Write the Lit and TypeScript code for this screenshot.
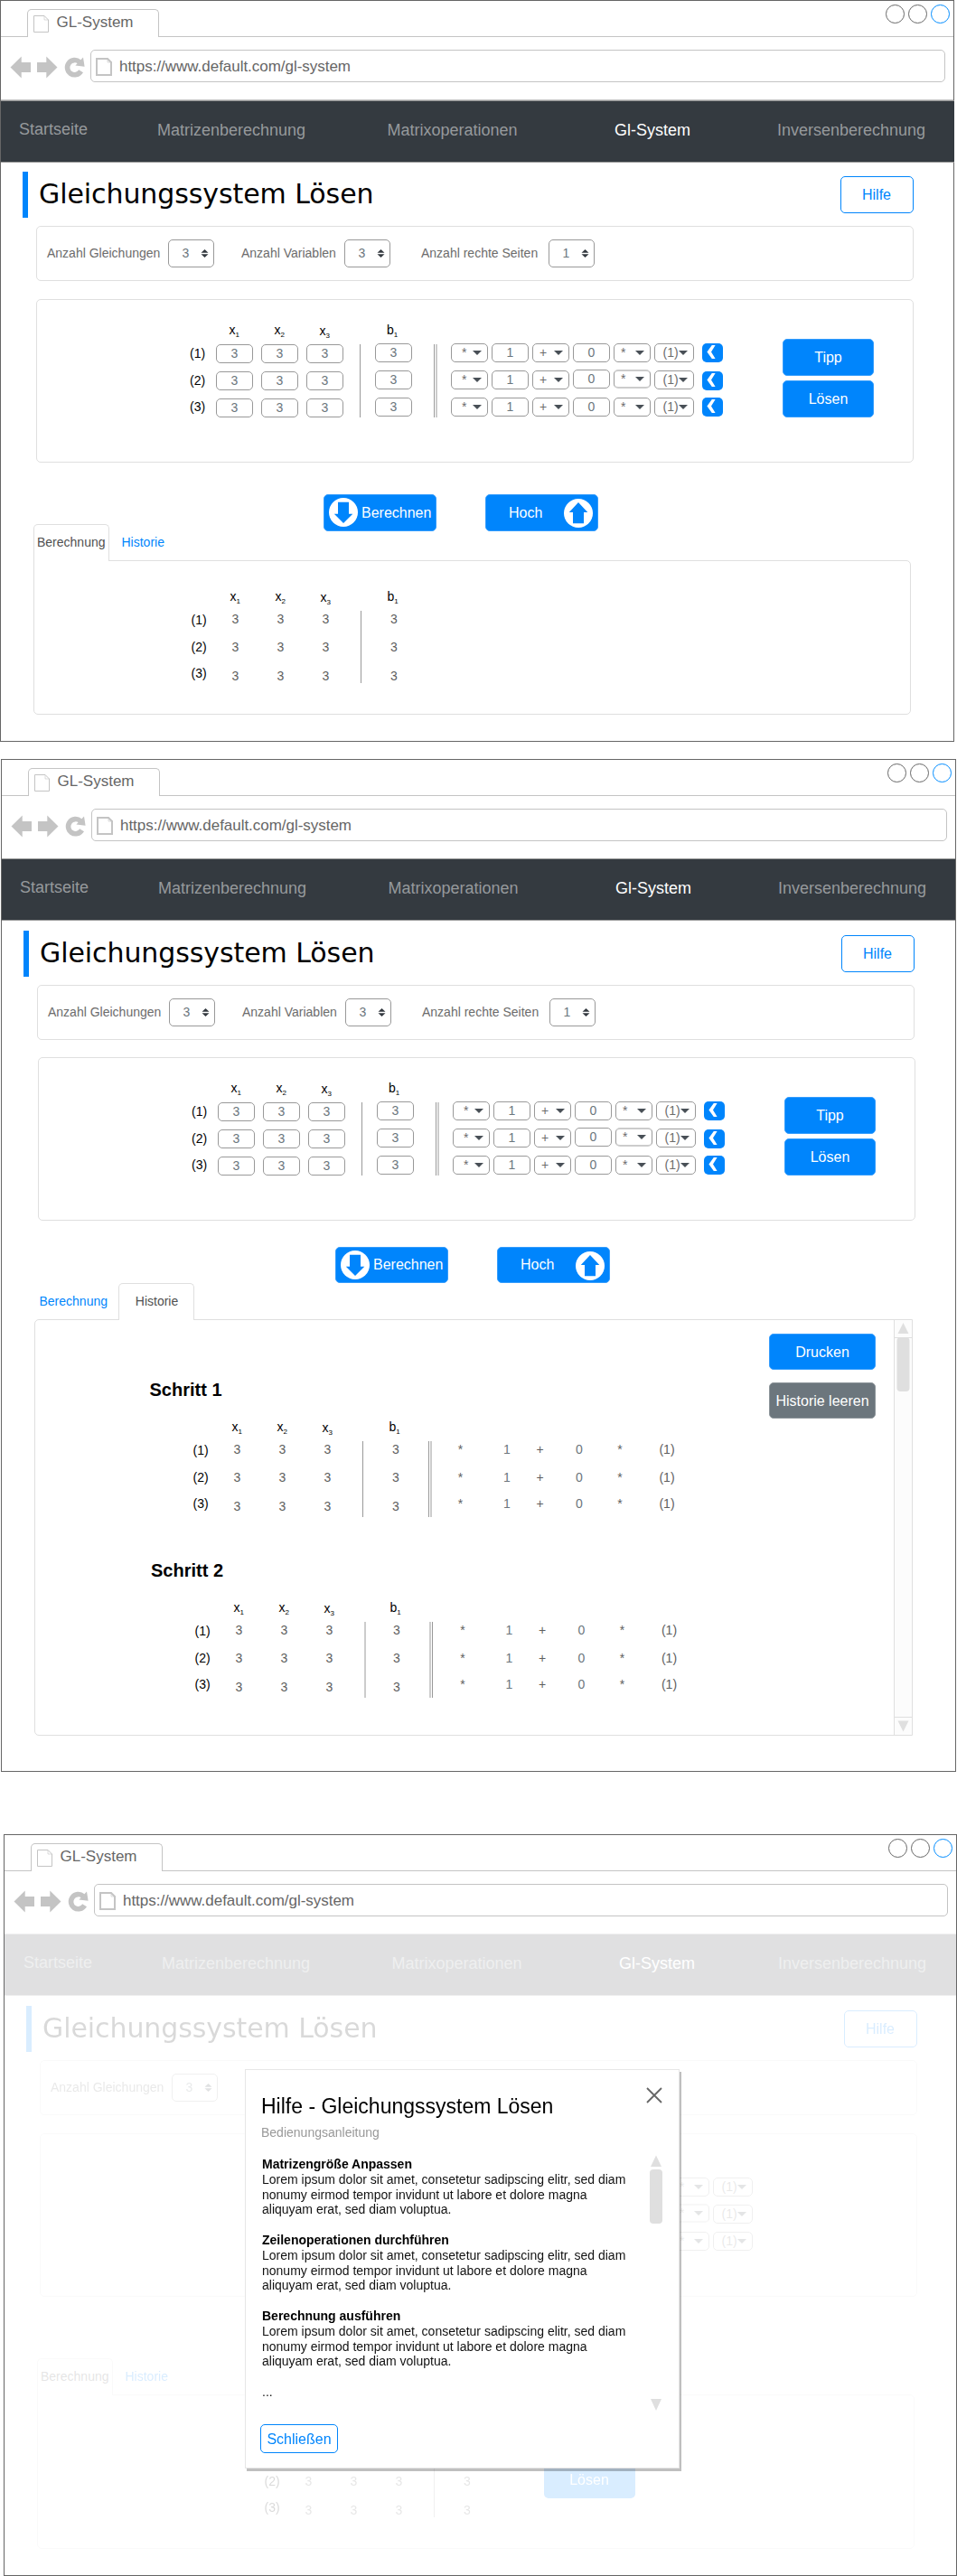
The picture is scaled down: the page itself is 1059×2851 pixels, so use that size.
import { LitElement, html, svg, css, nothing, TemplateResult } from "lit";
import { customElement, property } from "lit/decorators.js";
import { classMap } from "lit/directives/class-map.js";
import { styleMap } from "lit/directives/style-map.js";

type Part = TemplateResult | string | typeof nothing;

/** One vertical strip of a matrix: distance to the previous strip, width and stacked items. */
interface Strip {
  gap: number;
  width: number;
  items: Array<[number, Part]>;
}

const strip = (gap: number, width: number, items: Array<[number, Part]>): Strip => ({ gap, width, items });

const px = (n: number) => `${n}px`;

const renderStrips = (strips: Strip[]) =>
  strips.map(
    (s) => html`<div class="strip" style=${styleMap({ marginLeft: px(s.gap), width: px(s.width) })}>
      ${s.items.map(([top, part]) => html`<div class="item" style=${styleMap({ marginTop: px(top) })}>${part}</div>`)}
    </div>`
  );

const head = (name: string, index: string) => html`<span class="head ${name}">${name}<span class="idx">${index}</span></span>`;
const label = (n: number) => html`<span class="label">(${n})</span>`;
const field = (v: string) => html`<span class="field">${v}</span>`;
const value = (v: string) => html`<span class="value">${v}</span>`;
const soft = (v: string) => html`<span class="value soft">${v}</span>`;
const rule = (kind: string, height: number) => html`<span class="rule ${kind}" style=${styleMap({ height: px(height) })}></span>`;
const caret = html`<svg class="caret" width="10" height="5" viewBox="0 0 10 5"><path d="M0 0H10L5 5Z" fill="#495057" /></svg>`;
const pick = (v: string, kind: string) => html`<span class="field pick ${kind}"><span class="pickText">${v}</span>${caret}</span>`;
const apply = html`<span class="apply"
  ><svg width="10" height="15" viewBox="0 0 10 15"><path d="M5.8 0H9.6L5 7.5L9.6 15H5.8L.4 7.5Z" fill="#fff" /></svg
></span>`;

const arrowIcon = (up: boolean) => html`<svg class="round" width="32" height="32" viewBox="0 0 32 32">
  <circle cx="16" cy="16" r="16" fill="#fff" />
  ${up
    ? svg`<path d="M16 4L26.3 15H22V27.2H10V15H5.8Z" fill="#0085fc" />`
    : svg`<path d="M10 4.8H22V17.8H26.3L16 28L5.8 17.8H10Z" fill="#0085fc" />`}
</svg>`;

const pageIcon = (w: number, h: number, stroke: number) => html`<svg class="page" width=${w} height=${h} viewBox="0 0 ${w} ${h}" fill="none" stroke="#c4c4c4">
  <path d="M${stroke / 2} ${stroke / 2}H${w - 5}L${w - stroke / 2} 5V${h - stroke / 2}H${stroke / 2}Z" stroke-width=${stroke} />
  <path d="M${w - 5} .5V5H${w - 0.5}" stroke-width="1" opacity=".6" />
</svg>`;

const matrixStyles = css`
  .strip { flex: none; }
  .item { display: flex; }
  .head { color: #000; font-size: 14px; line-height: 16px; height: 16px; padding-left: 14.5px; white-space: nowrap; }
  .head.b { padding-left: 13px; }
  .idx { font-size: 8px; line-height: 0; position: relative; top: 3px; }
  .label { color: #000; font-size: 14px; line-height: 16px; }
  .field {
    width: 100%; height: 21px; border: 1px solid #999; border-radius: 5px; background: #fff;
    color: #6c767d; font-size: 14px; line-height: 18px; text-align: center;
  }
  .value { width: 100%; text-align: center; color: #5e5e5e; font-size: 14px; line-height: 16px; }
  .value.soft { color: #6c767d; }
  .rule { width: 100%; }
  .rule.thin { background: #999; }
  .rule.wide { background: #ccc; }
  .rule.thinWide { border-left: 1px solid #999; border-right: 2px solid #ccc; }
  .rule.wideThin { border-left: 2px solid #ccc; border-right: 1px solid #999; }
  .pick { display: flex; color: #6c6c6c; text-align: left; }
  .pickText { width: 23px; padding-left: 7px; flex: none; }
  .pick.first .pickText { padding-left: 11px; }
  .pick.row .pickText { width: 26px; padding-left: 8.5px; }
  .pick.double { border-top: 2px solid #ccc; border-bottom: 2px solid #ccc; line-height: 17px; }
  .pick.double .caret { margin-top: 6px; }
  .caret { margin-top: 7px; flex: none; display: block; }
  .apply { width: 23px; height: 21px; background: #0085fc; border-radius: 5px; padding: 2px 0 0 5.5px; }
  .apply svg { display: block; }
`;

const shared = css`
  * { box-sizing: border-box; }
  :host { display: block; font-family: "Liberation Sans", Arial, Helvetica, sans-serif; }
`;

/** Entry matrix with the row operations beside it. */
@customElement("matrix-editor")
class MatrixEditor extends LitElement {
  @property({ type: Boolean }) tail = false;

  static styles = [
    shared,
    matrixStyles,
    css`
      .editor { display: flex; width: 971px; height: 181px; border: 1px solid #dfdfdf; border-radius: 5px; }
      .editor { padding-left: 169px; }
      .editor.tail { padding-left: 699px; }
      .btns { margin: 43px 0 0 66px; display: flex; flex-direction: column; gap: 5px; }
      .btn {
        width: 101px; height: 41px; border-radius: 5px; border: 1px solid #369dfc; background: #0085fc; color: #fff;
        font-size: 16px; line-height: 40px; text-align: center;
      }
    `,
  ];

  private ops(): Strip[] {
    return [
      strip(4, 41, [[48, pick("*", "mid")], [8, pick("*", "double")], [10, pick("*", "mid")]]),
      strip(4, 44, [[48, pick("(1)", "row")], [9, pick("(1)", "row")], [9, pick("(1)", "row")]]),
    ];
  }

  render() {
    if (this.tail) {
      const [star, row] = this.ops();
      return html`<div class="editor tail">${renderStrips([{ ...star, gap: 0 }, row])}</div>`;
    }
    const x = (i: string, gap: number, extra = 0) =>
      strip(gap, 41, [[25 + extra, head("x", i)], [8 - extra, field("3")], [9, field("3")], [9, field("3")]]);
    const strips: Strip[] = [
      strip(0, 18, [[51, label(1)], [14, label(2)], [13, label(3)]]),
      x("1", 11),
      x("2", 9),
      x("3", 9, 1),
      strip(18, 1, [[49, rule("thin", 81)]]),
      strip(16, 41, [[25, head("b", "1")], [7, field("3")], [9, field("3")], [9, field("3")]]),
      strip(24, 4, [[49, rule("thinWide", 81)]]),
      strip(15, 41, [[48, pick("*", "first")], [9, pick("*", "first")], [9, pick("*", "first")]]),
      strip(4, 41, [[48, field("1")], [9, field("1")], [9, field("1")]]),
      strip(4, 41, [[48, pick("+", "mid")], [9, pick("+", "mid")], [9, pick("+", "mid")]]),
      strip(4, 41, [[48, field("0")], [8, field("0")], [10, field("0")]]),
      ...this.ops(),
      strip(8.5, 23.5, [[48, apply], [10, apply], [8, apply]]),
    ];
    return html`<div class="editor">
      ${renderStrips(strips)}
      <div class="btns"><div class="btn">Tipp</div><div class="btn">Lösen</div></div>
    </div>`;
  }
}

/** Read-only matrix; the history adds the operations, the dimmed page shows only the last rows. */
@customElement("matrix-result")
class MatrixResult extends LitElement {
  @property() mode: "plain" | "step1" | "step2" | "tail" = "plain";

  static styles = [shared, matrixStyles, css`.result { display: flex; }`];

  private strips(): Strip[] {
    if (this.mode === "tail") {
      const col = (gap: number) => strip(gap, 41, [[87, value("3")], [16, value("3")]]);
      return [
        strip(0, 18, [[87, label(2)], [13, label(3)]]),
        col(10.5),
        col(9),
        col(9),
        strip(17.5, 1, [[80, rule("thin", 55)]]),
        col(16),
      ];
    }
    const step = this.mode !== "plain";
    const second = this.mode === "step2";
    const col = (name: string, i: string, gap: number, extra = 0) =>
      strip(gap, 41, [
        [31 + extra, head(name, i)],
        [9 - extra, value("3")],
        [15, value("3")],
        [16, value("3")],
      ]);
    const list: Strip[] = [
      strip(0, 18, [[57, label(1)], [14, label(2)], [13, label(3)]]),
      col("x", "1", 10.5),
      col("x", "2", 9),
      col("x", "3", 9, 1),
      second ? strip(17.5, 2, [[55, rule("wide", 84)]]) : strip(17.5, 1, [[55, rule("thin", step ? 84 : 80)]]),
      col("b", "1", second ? 14 : 16),
    ];
    if (step) {
      const op = (v: string, gap: number, tint = false) => {
        const cell = tint ? soft : value;
        return strip(gap, 30, [[56, cell(v)], [15, cell(v)], [13, cell(v)]]);
      };
      list.push(
        strip(second ? 15.5 : 15, 4, [[55, rule(second ? "wideThin" : "thinWide", 84)]]),
        op("*", second ? 18 : 17),
        op("1", 21.5, true),
        op("+", 6.5),
        op("0", 13.5, true),
        op("*", 15),
        op("(1)", 22)
      );
    }
    return list;
  }

  render() {
    return html`<div class="result">${renderStrips(this.strips())}</div>`;
  }
}

/** Help dialog over the dimmed page. */
@customElement("help-dialog")
class HelpDialog extends LitElement {
  static styles = [
    shared,
    css`
      .dialog {
        width: 481px; height: 442px; background: #fff; border: 1px solid #e6e6e6; box-shadow: 2px 3px 0 rgba(0, 0, 0, 0.25);
        display: flex; padding: 0 17px 0 17px; justify-content: space-between;
      }
      .title { font-size: 23px; line-height: 26px; margin-top: 27px; white-space: nowrap; color: #000; }
      .sub { font-size: 14px; line-height: 16px; color: #999; margin-top: 8px; }
      .text { font-size: 14px; line-height: 16.8px; color: #111; margin: 19px 0 0 1px; white-space: pre; }
      .text b { color: #000; }
      .close {
        margin: 27px 0 0 -1px; width: 86px; height: 32px; border: 1px solid #0085fc; border-radius: 5px; color: #0085fc;
        font-size: 16px; line-height: 31px; text-align: center;
      }
      .side { display: flex; flex-direction: column; align-items: flex-end; margin-top: 19px; }
      .side svg { display: block; }
      .bar { margin-top: 57px; }
    `,
  ];

  render() {
    const lorem =
      "Lorem ipsum dolor sit amet, consetetur sadipscing elitr, sed diam\nnonumy eirmod tempor invidunt ut labore et dolore magna\naliquyam erat, sed diam voluptua.\n\n";
    const heads = ["Matrizengröße Anpassen", "Zeilenoperationen durchführen", "Berechnung ausführen"];
    return html`<div class="dialog">
      <div>
        <div class="title">Hilfe - Gleichungssystem Lösen</div>
        <div class="sub">Bedienungsanleitung</div>
        <div class="text">${heads.map((h) => html`<b>${h}</b>${"\n" + lorem}`)}...</div>
        <div class="close">Schließen</div>
      </div>
      <div class="side">
        <svg width="19" height="18" viewBox="0 0 19 18"><path d="M1 1L17 17M17 1L1 17" stroke="#666" stroke-width="1.8" /></svg>
        <svg class="bar" width="16" height="284" viewBox="0 0 16 284" fill="#dfdfdf">
          <path d="M8 .5L14 13H2Z" />
          <rect x="1" y="16" width="14" height="60" rx="4" />
          <path d="M2 270H14L8 283Z" />
        </svg>
      </div>
    </div>`;
  }
}

/** A browser window with the equation system page in it. */
@customElement("gl-window")
class GlWindow extends LitElement {
  @property() view: "calc" | "history" | "help" = "calc";

  static styles = [
    shared,
    css`
      .window { border: 1px solid #666; background: #fff; position: relative; }
      .calc { width: 1056px; height: 821px; }
      .history { width: 1057px; height: 1121px; }
      .help { width: 1055px; height: 821px; }

      .tabs { display: flex; height: 40px; border-bottom: 1px solid #c4c4c4; padding-left: 29px; align-items: flex-end; }
      .tab {
        width: 146px; height: 31px; margin-bottom: -1px; background: #fff; border: 1px solid #c4c4c4; border-bottom: 0;
        border-radius: 5px 5px 0 0; display: flex; padding: 4px 0 0 6px;
      }
      .tabText { font-size: 17px; line-height: 19px; color: #666; margin-left: 8.5px; white-space: nowrap; }
      .page { display: block; flex: none; }
      .tab .page { margin-top: 2px; }
      .dots { margin: 0 4px 14px auto; display: flex; gap: 4px; }
      .dot { width: 21px; height: 21px; border: 1px solid #666; border-radius: 50%; }
      .dot.on { border-color: #008cff; }

      .address { display: flex; height: 69px; padding: 14px 9px 0 0; }
      .calc .address { height: 70px; border-bottom: 1px solid #c4c4c4; }
      .arrows { flex: none; display: block; }
      .url { flex: 1; height: 36px; border: 1px solid #c4c4c4; border-radius: 5px; display: flex; padding: 8px 0 0 5px; }
      .urlText { font-size: 17px; line-height: 19px; color: #666; margin-left: 8px; letter-spacing: -0.03px; }

      .nav {
        display: flex; height: 69px; background: #343a40; border: solid #999; border-width: 1px 0; color: #96999c;
        font-size: 18px; line-height: 20px; padding: 22px 0 0 20px; white-space: nowrap;
      }
      .calc .nav { margin-right: -1px; position: relative; }
      .help .nav { padding-left: 21px; }
      .nav div:nth-child(1) { width: 153px; margin-top: -1px; }
      .nav div:nth-child(2) { width: 254.5px; }
      .nav div:nth-child(3) { width: 251.5px; }
      .nav div:nth-child(4) { width: 180px; color: #fff; }
      .help .nav div:nth-child(4) { width: 176px; }

      .help .dim { opacity: 0.15; }
      .titleRow { display: flex; height: 51px; margin-top: 11px; padding-left: 24px; }
      .calc .titleRow { margin-top: 10px; }
      .mark { width: 6px; background: #0085fc; }
      .title {
        font-family: "DejaVu Sans", sans-serif; font-size: 30px; line-height: 35px; padding: 7px 0 0 12px; width: 899px; color: #000;
        letter-spacing: -0.08px;
      }
      .helpBtn {
        width: 81px; height: 41px; margin-top: 5px; border: 1px solid #0085fc; border-radius: 5px; color: #0085fc;
        font-size: 16px; line-height: 39px; text-align: center; padding-right: 1px;
      }
      .settings { margin: 9px 0 0 39px; width: 971px; height: 61px; border: 1px solid #dfdfdf; border-radius: 5px; display: flex; padding: 14px 0 0 11px; }
      .name { font-size: 14px; line-height: 16px; color: #6c6c6c; padding-top: 7px; white-space: nowrap; }
      .n1 { width: 134px; }
      .n2 { width: 114px; margin-left: 30px; }
      .n3 { width: 141px; margin-left: 34px; }
      .select { width: 51px; height: 31px; border: 1px solid #999; border-radius: 5px; display: flex; padding-left: 14.5px; color: #6c767d; font-size: 14px; line-height: 28px; }
      .select svg { margin: 10px 0 0 12.5px; display: block; }

      .editor { margin: 20px 0 0 39px; }
      .history .editor { margin: 19px 0 0 40px; }

      .actions { display: flex; gap: 54px; height: 33px; margin: 35px 0 0 357px; }
      .history .actions { height: 40px; margin: 29px 0 0 369px; }
      .action {
        width: 125px; height: 41px; flex: none; background: #0085fc; border: 1px solid #369dfc; border-radius: 5px; color: #fff; font-size: 16px;
        line-height: 39px; display: flex; padding-left: 5px;
      }
      .history .action { height: 40px; line-height: 38px; }
      .action .round { margin-top: 3px; flex: none; display: block; }
      .action span { margin-left: 4px; }
      .action.up { padding-left: 25px; }
      .action.up span { margin: 0 24px 0 0; }
      .action.up .round { margin-top: 4px; }
      .help .actions { height: 68px; margin-top: 0; }

      .views { display: flex; height: 40px; padding-left: 36px; font-size: 14px; line-height: 16px; }
      .view { height: 41px; width: 84px; padding-top: 12px; color: #0085fc; flex: none; text-align: center; }
      .view.on { border: 1px solid #dfdfdf; border-bottom: 0; border-radius: 5px 5px 0 0; background: #fff; color: #505050; padding-top: 11px; position: relative; }
      .view.narrow { text-align: left; padding-left: 3px; }
      .view.idle { text-align: left; padding-left: 13.5px; }
      .history .view.idle { width: 93px; padding-left: 5.5px; }
      .history .view.on { padding-left: 1px; }

      .output { width: 971px; height: 171px; margin-left: 36px; border: 1px solid #dfdfdf; border-radius: 0 5px 5px 5px; padding-left: 173.5px; display: flex; }
      .help .output { padding-left: 250.5px; }
      .ghost {
        margin: 73px 0 0 64px; width: 101px; height: 41px; border-radius: 5px; background: #0085fc; color: #fff; font-size: 16px;
        line-height: 41px; text-align: center;
      }

      .history .output { height: 461px; width: 972px; border-radius: 5px 0 0 5px; padding: 0; justify-content: space-between; }
      .steps { padding-left: 126.5px; }
      .step { height: 200px; }
      .stepName { font-size: 20px; line-height: 22px; font-weight: bold; color: #000; padding-top: 66px; height: 79px; white-space: nowrap; }
      .stepBody { padding-left: 48px; }
      .step.second .stepName { padding-left: 1.5px; }
      .step.second .stepBody { padding-left: 50px; }
      .side { display: flex; }
      .tools { display: flex; flex-direction: column; gap: 14px; margin: 15px 20px 0 0; }
      .tool { width: 118px; height: 40px; border: 1px solid #369dfc; border-radius: 5px; background: #0085fc; color: #fff; font-size: 16px; line-height: 39px; text-align: center; }
      .tool.gray { background: #6c767d; border-color: #8d959a; }
      .scroll { width: 20px; border-left: 1px solid #dfdfdf; background: #fcfcfc; }
      .scroll svg { display: block; }
    `,
  ];

  private select(label: string, cls: string, v: string) {
    return html`<div class="name ${cls}">${label}</div>
      <div class="select">${v}<svg width="9" height="9" viewBox="0 0 9 9" fill="#343a40"><path d="M4.5 0L8.5 3.8H.5ZM.5 5.2H8.5L4.5 9Z" /></svg></div>`;
  }

  private output() {
    if (this.view === "calc") return html`<matrix-result></matrix-result>`;
    if (this.view === "help") return html`<matrix-result mode="tail"></matrix-result><div class="ghost">Lösen</div>`;
    return html`<div class="steps">
        <div class="step"><div class="stepName">Schritt 1</div><matrix-result class="stepBody" mode="step1"></matrix-result></div>
        <div class="step second"><div class="stepName">Schritt 2</div><matrix-result class="stepBody" mode="step2"></matrix-result></div>
      </div>
      <div class="side">
        <div class="tools"><div class="tool">Drucken</div><div class="tool gray">Historie leeren</div></div>
        <div class="scroll">
          <svg width="19" height="459" viewBox="0 0 19 459" fill="#dfdfdf">
            <path d="M9.5 3L15.5 15H3.5Z" />
            <rect y="19" width="19" height="1" />
            <rect x="2.5" y="19" width="14" height="60" rx="4" />
            <rect y="439" width="19" height="1" />
            <path d="M3.5 443.5H15.5L9.5 455.5Z" />
          </svg>
        </div>
      </div>`;
  }

  render() {
    const help = this.view === "help";
    const history = this.view === "history";
    return html`<div class=${classMap({ window: true, [this.view]: true })}>
      <div class="tabs">
        <div class="tab">${pageIcon(17, 19, 1)}<div class="tabText">GL-System</div></div>
        <div class="dots"><div class="dot"></div><div class="dot"></div><div class="dot on"></div></div>
      </div>
      <div class="address">
        <svg class="arrows" width="99" height="36" viewBox="0 0 99 36" fill="#c4c4c4">
          <path d="M10.5 19.5L22.7 7.5V14H33V25H22.7V31.5Z" />
          <path d="M62.5 19.5L50.3 7.5V14H40V25H50.3V31.5Z" />
          <path d="M88.6 23.8A8.1 8.1 0 1 1 87 13.6" fill="none" stroke="#c4c4c4" stroke-width="5.6" />
          <path d="M91 8.6L92.6 18.8L82.4 17.4Z" />
        </svg>
        <div class="url">${pageIcon(18, 20, 2)}<div class="urlText">https://www.default.com/gl-system</div></div>
      </div>
      <div class="nav dim">
        <div>Startseite</div><div>Matrizenberechnung</div><div>Matrixoperationen</div><div>Gl-System</div><div>Inversenberechnung</div>
      </div>
      <div class="dim">
        <div class="titleRow">
          <div class="mark"></div>
          <div class="title">Gleichungssystem Lösen</div>
          <div class="helpBtn">Hilfe</div>
        </div>
        <div class="settings">
          ${this.select("Anzahl Gleichungen", "n1", "3")}
          ${help ? nothing : html`${this.select("Anzahl Variablen", "n2", "3")} ${this.select("Anzahl rechte Seiten", "n3", "1")}`}
        </div>
        <matrix-editor class="editor" ?tail=${help}></matrix-editor>
        <div class="actions">
          ${help
            ? nothing
            : html`<div class="action">${arrowIcon(false)}<span>Berechnen</span></div>
                <div class="action up"><span>Hoch</span>${arrowIcon(true)}</div>`}
        </div>
        <div class="views">
          ${history
            ? html`<div class="view idle">Berechnung</div><div class="view on">Historie</div>`
            : html`<div class="view on narrow">Berechnung</div><div class="view idle">Historie</div>`}
        </div>
        <div class="output">${this.output()}</div>
      </div>
    </div>`;
  }
}

@customElement("app-root")
class AppRoot extends LitElement {
  static styles = [
    shared,
    css`
      :host { width: 1059px; height: 2851px; background: #fff; overflow: hidden; }
      .second { margin: 19px 0 0 1px; }
      .third { margin: 69px 0 0 4px; position: relative; }
      .overlay { position: absolute; left: 267px; top: 260px; }
    `,
  ];

  render() {
    return html`<gl-window view="calc"></gl-window>
      <gl-window class="second" view="history"></gl-window>
      <div class="third">
        <gl-window view="help"></gl-window>
        <help-dialog class="overlay"></help-dialog>
      </div>`;
  }
}
